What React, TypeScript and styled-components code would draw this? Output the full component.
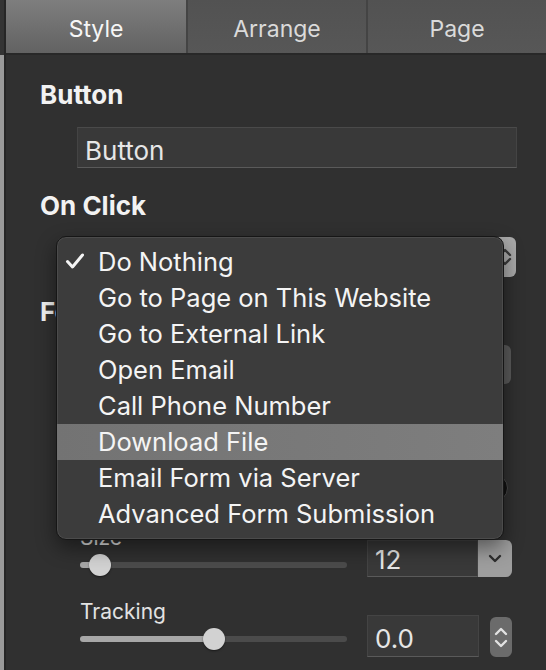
import React from "react";
import styled, { createGlobalStyle } from "styled-components";

const GlobalStyle = createGlobalStyle`
  html, body {
    margin: 0;
    padding: 0;
    background: #303030;
  }
  body {
    font-family: Inter, "Liberation Sans", sans-serif;
    -webkit-font-smoothing: antialiased;
  }
`;

const tabs = ["Style", "Arrange", "Page"];

const actions = [
  "Do Nothing",
  "Go to Page on This Website",
  "Go to External Link",
  "Open Email",
  "Call Phone Number",
  "Download File",
  "Email Form via Server",
  "Advanced Form Submission",
];

const checked = 0;
const highlighted = 5;

const Check = () => (
  <CheckMark width="20" height="16" viewBox="0 0 20 16">
    <polyline
      points="2.5,8.5 7.5,14 17.5,2"
      fill="none"
      stroke="#f4f4f4"
      strokeWidth="3"
      strokeLinecap="round"
      strokeLinejoin="round"
    />
  </CheckMark>
);

const Chevron = ({ up, color }: { up?: boolean; color: string }) => (
  <svg width="14" height="9" viewBox="0 0 14 9">
    <polyline
      points={up ? "2,7 7,2 12,7" : "2,2 7,7 12,2"}
      fill="none"
      stroke={color}
      strokeWidth="2.4"
      strokeLinecap="round"
      strokeLinejoin="round"
    />
  </svg>
);

const Slider = ({ value }: { value: number }) => (
  <SliderBox>
    <Track $fill={value * 100} />
    <Knob style={{ left: `calc(${value * 100}% - 11px)` }} />
  </SliderBox>
);

const App = () => {
  return (
    <>
      <GlobalStyle />
      <Frame>
        <Edge />
        <Main>
          <Tabs>
            {tabs.map((t, i) => (
              <Tab key={t} $active={i === 0}>
                {t}
              </Tab>
            ))}
          </Tabs>

          <Panel>
            <Heading $top={0}>Button</Heading>
            <TextField>Button</TextField>

            <Heading $top={22}>On Click</Heading>
            <PopupButton>
              <PopupStepper>
                <Chevron up color="#3a3a3a" />
                <Chevron color="#3a3a3a" />
              </PopupStepper>
            </PopupButton>

            <Heading $top={19}>Font</Heading>
            <FontPopup />
            <ColorRow>
              <ColorWell />
            </ColorRow>

            <ControlRow $top={23}>
              <SliderColumn>
                <Label>Size</Label>
                <Slider value={0.075} />
              </SliderColumn>
              <Combo>
                <ComboField>12</ComboField>
                <ComboButton>
                  <Chevron color="#2e2e2e" />
                </ComboButton>
              </Combo>
            </ControlRow>

            <ControlRow $top={23}>
              <SliderColumn>
                <Label>Tracking</Label>
                <Slider value={0.5} />
              </SliderColumn>
              <NumberGroup>
                <NumberField>0.0</NumberField>
                <Stepper>
                  <Chevron up color="#e2e2e2" />
                  <Chevron color="#e2e2e2" />
                </Stepper>
              </NumberGroup>
            </ControlRow>

            <Menu>
              {actions.map((a, i) => (
                <MenuItem key={a} $active={i === highlighted}>
                  {i === checked && <Check />}
                  {a}
                </MenuItem>
              ))}
            </Menu>
          </Panel>
        </Main>
      </Frame>
    </>
  );
};

export default App;

const Frame = styled.div`
  width: 546px;
  height: 670px;
  display: flex;
  overflow: hidden;
  background: #303030;
`;

const Edge = styled.div`
  width: 4px;
  flex-shrink: 0;
  background: linear-gradient(to bottom, #343434 0, #343434 55px, #9a9a9a 55px);
`;

const Main = styled.div`
  flex: 1;
  display: flex;
  flex-direction: column;
  border-left: 2px solid #262626;
`;

const Tabs = styled.div`
  height: 53px;
  display: grid;
  grid-template-columns: 180px 178px 1fr;
  column-gap: 2px;
  background: #444444;
  border-bottom: 2px solid #282828;
`;

const Tab = styled.div<{ $active?: boolean }>`
  display: flex;
  align-items: center;
  justify-content: center;
  padding-top: 5px;
  font-size: 23px;
  color: ${(p) => (p.$active ? "#f6f6f6" : "#dadada")};
  background: ${(p) =>
    p.$active
      ? "linear-gradient(to bottom, #7e7e7e, #626262)"
      : "linear-gradient(to bottom, #525252, #575757)"};
`;

const Panel = styled.div`
  position: relative;
  flex: 1;
  display: flex;
  flex-direction: column;
  padding: 24px 0 0 34px;
`;

const Heading = styled.div<{ $top: number }>`
  margin-top: ${(p) => p.$top}px;
  font-size: 26px;
  font-weight: 700;
  line-height: 32px;
  color: #f2f2f2;
`;

const TextField = styled.div`
  margin: 16px 0 0 37px;
  width: 440px;
  height: 41px;
  box-sizing: border-box;
  padding: 6px 0 0 7px;
  line-height: 33px;
  font-size: 26px;
  color: #e6e6e6;
  background: #393939;
  border: 1px solid #444444;
  border-top-color: #4a4a4a;
  border-bottom-color: #5a5a5a;
`;

const PopupButton = styled.div`
  margin: 15px 0 0 17px;
  width: 459px;
  height: 40px;
  display: flex;
  justify-content: flex-end;
  border-radius: 6px;
  background: #414141;
  overflow: hidden;
`;

const PopupStepper = styled.div`
  width: 22px;
  display: flex;
  flex-direction: column;
  align-items: center;
  justify-content: center;
  background: #a9a9a9;
`;

const FontPopup = styled.div`
  margin: 17px 0 0 37px;
  width: 434px;
  height: 39px;
  border-radius: 6px;
  background: #5a5a5a;
`;

const ColorRow = styled.div`
  margin-top: 90px;
  width: 468px;
  height: 28px;
  display: flex;
  justify-content: flex-end;
`;

const ColorWell = styled.div`
  width: 28px;
  height: 28px;
  box-sizing: border-box;
  border-radius: 50%;
  background: #111111;
  border: 1px solid #4a4a4a;
`;

const ControlRow = styled.div<{ $top: number }>`
  margin-top: ${(p) => p.$top}px;
  padding-left: 40px;
  display: flex;
  align-items: flex-end;
  gap: 20px;
`;

const SliderColumn = styled.div`
  width: 267px;
  display: flex;
  flex-direction: column;
  gap: 3px;
`;

const Label = styled.div`
  font-size: 21px;
  line-height: 26px;
  color: #e2e2e2;
`;

const SliderBox = styled.div`
  position: relative;
  height: 22px;
  display: flex;
  align-items: center;
`;

const Track = styled.div<{ $fill: number }>`
  width: 100%;
  height: 6px;
  border-radius: 3px;
  background: linear-gradient(
    to right,
    #a7a7a7 0,
    #a7a7a7 ${(p) => p.$fill}%,
    #4b4b4b ${(p) => p.$fill}%
  );
`;

const Knob = styled.div`
  position: absolute;
  top: 0;
  width: 22px;
  height: 22px;
  border-radius: 50%;
  background: #d2d2d2;
  box-shadow: 0 1px 2px rgba(0, 0, 0, 0.5);
`;

const Combo = styled.div`
  width: 145px;
  height: 37px;
  display: flex;
  margin-bottom: -1px;
`;

const ComboField = styled.div`
  flex: 1;
  box-sizing: border-box;
  padding: 3px 0 0 7px;
  line-height: 32px;
  font-size: 26px;
  color: #e6e6e6;
  background: #393939;
  border: 1px solid #444444;
  border-bottom-color: #5a5a5a;
`;

const ComboButton = styled.div`
  width: 34px;
  display: flex;
  align-items: center;
  justify-content: center;
  border-radius: 0 6px 6px 0;
  background: #9e9e9e;
`;

const NumberGroup = styled.div`
  display: flex;
  align-items: flex-end;
  gap: 11px;
  margin-bottom: -7px;
`;

const NumberField = styled.div`
  width: 112px;
  height: 42px;
  box-sizing: border-box;
  padding: 6px 0 0 7px;
  line-height: 33px;
  font-size: 26px;
  color: #e6e6e6;
  background: #393939;
  border: 1px solid #444444;
  border-bottom-color: #5a5a5a;
`;

const Stepper = styled.div`
  width: 22px;
  height: 40px;
  display: flex;
  flex-direction: column;
  align-items: center;
  justify-content: center;
  gap: 3px;
  border-radius: 6px;
  background: #6b6b6b;
`;

const Menu = styled.div`
  position: absolute;
  top: 181px;
  left: 50px;
  width: 448px;
  height: 304px;
  box-sizing: border-box;
  padding: 7px 0;
  border: 1px solid #161616;
  border-radius: 10px;
  background: #3c3c3c;
  box-shadow: inset 0 0 0 1px #4b4b4b, 0 8px 20px rgba(0, 0, 0, 0.45);
  overflow: hidden;
`;

const MenuItem = styled.div<{ $active?: boolean }>`
  position: relative;
  height: 36px;
  padding-left: 41px;
  font-size: 25.5px;
  line-height: 36px;
  color: #f4f4f4;
  white-space: nowrap;
  background: ${(p) =>
    p.$active ? "linear-gradient(to right, #737373, #7e7e7e)" : "transparent"};
`;

const CheckMark = styled.svg`
  position: absolute;
  left: 8px;
  top: 9px;
`;
